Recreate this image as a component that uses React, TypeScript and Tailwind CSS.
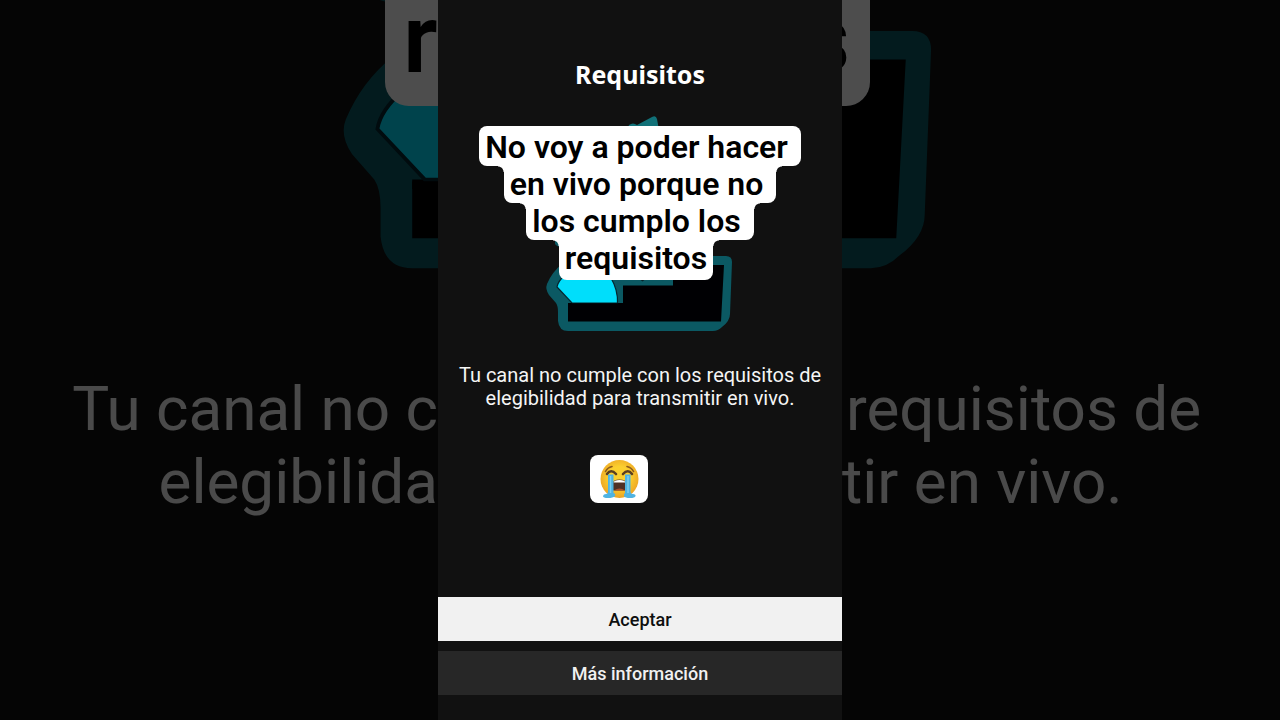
const captionRows = [
  { text: "No voy a poder hacer", box: "h-10 pt-[3px] pr-[13px] rounded-lg" },
  { text: "en vivo porque no", box: "h-[37px] pr-[13px] rounded-b-lg" },
  { text: "los cumplo los", box: "h-[37px] pr-[13px] rounded-b-lg" },
  { text: "requisitos", box: "h-10 pr-1.5 mr-2 rounded-b-lg" },
];

const innerCorners =
  "before:absolute before:top-0 before:-left-1.5 before:size-1.5 before:bg-[radial-gradient(circle_at_0_100%,transparent_5px,white_6px)] after:absolute after:top-0 after:-right-1.5 after:size-1.5 after:bg-[radial-gradient(circle_at_100%_100%,transparent_5px,white_6px)]";

function Illustration({ className }: { className: string }) {
  return (
    <svg viewBox="540 110 200 226" className={className} aria-hidden="true">
      <path d="M627 130 629 125Q633 122 637 125L652 117Q656 115 657 119L659 130Z" fill="#117178" />
      <path d="M555 240H562V247Q557 247 555 244Z" fill="#0b5963" />
      <path
        d="M562 264Q552 272 547 284Q545 289 549 295L556 303Q558 306 558 312V321Q559 331 568 331H713Q718 331 722 327Q730 321 730 314L732 262Q732 256 726 256H700L562 262Z"
        fill="#0b5963"
      />
      <path d="M700 265H724L721 321.500H568V303H623V285.500H673V265Z" fill="#000003" />
      <path
        d="M565 275Q558 281 557 287L572 303H617.500Q618 290 611 278V275Z"
        fill="#00defb"
        stroke="#04262e"
        strokeWidth="1.200"
      />
      <path d="M568 303.600H618V306H568Z" fill="#000003" />
      <path d="M640 279.500 642.500 281.500 645 279.500Z" fill="#082329" />
    </svg>
  );
}

function CryingFace() {
  return (
    <svg viewBox="0 0 40 40" className="size-10" role="img" aria-label="Cara llorando">
      <defs>
        <radialGradient id="face" cx="50%" cy="45%" r="55%">
          <stop offset="0.5" stopColor="#fbd02f" />
          <stop offset="1" stopColor="#eda324" />
        </radialGradient>
      </defs>
      <circle cx="20.500" cy="20" r="19" fill="url(#face)" />
      <path d="M6.500 12.500Q8.500 8.500 13 7.500M34.500 12.500Q32.500 8.500 28 7.500" fill="none" stroke="#8b5a1d" strokeWidth="1.600" strokeLinecap="round" />
      <path d="M8 15Q12 9.500 17 15M24 15Q29 9.500 33 15" fill="none" stroke="#5c3f20" strokeWidth="2.600" strokeLinecap="round" />
      <path d="M14 24Q14 20.500 20.500 20.500Q27 20.500 27 24V31.500H14Z" fill="#4f3026" />
      <path d="M14.500 23.500Q15 21 20.500 21Q26 21 26.500 23.500Z" fill="#fff" />
      <path d="M15 31.500Q20.500 27.500 26 31.500Z" fill="#a8502f" />
      <path d="M9 15.500H14.500V34Q17 35 16 37Q14 39 9 39Q4 39 4 37Q4.500 35 7 35Q9 35 9 33Z" fill="#4fb3e2" />
      <path d="M26 15.500H31.500V33Q31.500 35 34 35Q37 35.500 36.500 37Q36 39 31 39Q26 39 25 37Q24.500 35 26 34Z" fill="#4fb3e2" />
      <path d="M11.500 17V34M29 17V34" stroke="#7dd0f2" strokeWidth="1.500" />
    </svg>
  );
}

function Backdrop() {
  return (
    <div aria-hidden="true" className="absolute inset-0 overflow-hidden bg-[#111111] opacity-30">
      <Illustration className="absolute -top-[431px] left-1/2 h-[715px] w-[633px] -translate-x-1/2" />
      <div className="relative grid grid-cols-[1fr_404px_1fr] text-[#f5f5f5]">
        <div className="flex flex-col items-end overflow-hidden">
          <p className="h-[106px] w-[53px] overflow-hidden rounded-bl-3xl bg-white pl-[18px] text-[96px] leading-[78px] font-semibold text-black">r</p>
          <p className="mt-[266px] text-right text-[62px] leading-[73px] whitespace-nowrap">
            Tu canal no c
            <br />
            elegibilida
          </p>
        </div>
        <div className="col-start-3 flex flex-col items-start overflow-hidden">
          <p className="flex h-[106px] w-7 justify-end overflow-hidden rounded-br-3xl bg-white pr-5 text-[96px] leading-[78px] font-semibold text-black">s</p>
          <p className="mt-[266px] text-[62px] leading-[73px] whitespace-nowrap">
            <span className="pl-1">requisitos de</span>
            <br />
            tir en vivo.
          </p>
        </div>
      </div>
    </div>
  );
}

export default function App() {
  return (
    <div className="relative flex min-h-screen justify-center overflow-hidden bg-black font-['Roboto','Liberation_Sans',sans-serif]">
      <Backdrop />
      <main className="relative flex w-full max-w-[404px] flex-col items-center bg-[#111111] pt-14 pb-[25px]">
        <h1 className="font-['Noto_Sans','Open_Sans',sans-serif] text-[25px] leading-9 font-bold text-white">Requisitos</h1>
        <div className="mt-[18px] grid justify-items-center">
          <Illustration className="col-start-1 row-start-1 h-[226px] w-[200px]" />
          <p className="relative col-start-1 row-start-1 flex flex-col items-center pt-4 text-[32px] leading-9 font-semibold text-black">
            {captionRows.map((row, i) => (
              <span key={row.text} className={`relative bg-white pl-1.5 whitespace-nowrap ${row.box} ${i ? innerCorners : ""}`}>
                {row.text}
              </span>
            ))}
          </p>
        </div>
        <p className="mt-7 text-center text-xl leading-[23px] text-[#f5f5f5]">
          Tu canal no cumple con los requisitos de
          <br />
          elegibilidad para transmitir en vivo.
        </p>
        <div className="mt-[45px] mr-[42px] flex h-12 w-[58px] items-center justify-center rounded-lg bg-white">
          <CryingFace />
        </div>
        <div className="mt-auto flex w-full flex-col gap-2.5 text-lg font-medium">
          <button type="button" className="h-11 bg-[#f1f1f1] pt-0.5 text-[#0f0f0f]">Aceptar</button>
          <button type="button" className="h-11 bg-[#272727] pt-0.5 text-[#f1f1f1]">Más información</button>
        </div>
      </main>
    </div>
  );
}
